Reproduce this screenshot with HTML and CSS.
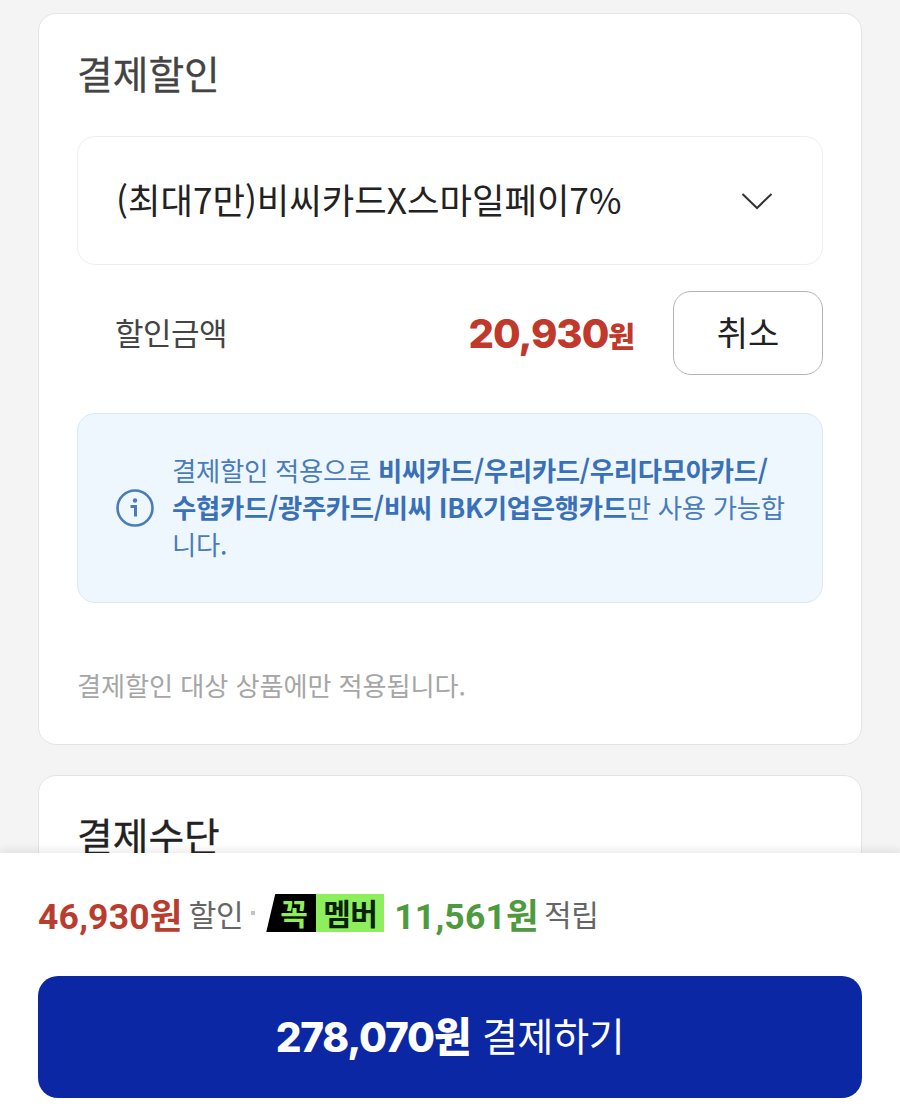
FILE: index.html
```html
<!DOCTYPE html>
<html lang="ko">
<head>
<meta charset="utf-8">
<title>결제할인</title>
<link rel="stylesheet" href="styles.css">
</head>
<body>
<main class="page">
  <section class="card">
    <h2 class="card-title">결제할인</h2>
    <div class="select">
      <span class="select-label">(최대7만)비씨카드X스마일페이7%</span>
      <svg class="chevron" width="32" height="20" viewBox="0 0 32 20"><path d="M1.5 3 L16 17 L30.5 3" fill="none" stroke="#333" stroke-width="2"/></svg>
    </div>
    <div class="amount-row">
      <span class="amount-label">할인금액</span>
      <span class="amount-value"><b class="amount-num">20,930</b><b class="amount-unit">원</b></span>
      <button class="cancel">취소</button>
    </div>
    <div class="notice">
      <svg class="info" width="40" height="40" viewBox="0 0 40 40"><circle cx="20" cy="20" r="17.5" fill="none" stroke="#4a7cba" stroke-width="2.6"/><circle cx="20" cy="12.5" r="2.2" fill="#4a7cba"/><path d="M15.5 18.5 H20.5 V28.5" fill="none" stroke="#4a7cba" stroke-width="3"/></svg>
      <p class="notice-text">결제할인 적용으로 <b>비씨카드/우리카드/우리다모아카드/수협카드/광주카드/비씨 IBK기업은행카드</b>만 사용 가능합니다.</p>
    </div>
    <p class="foot-note">결제할인 대상 상품에만 적용됩니다.</p>
  </section>
  <section class="card card-next">
    <h2 class="card-title card-title-dark">결제수단</h2>
  </section>
</main>
<footer class="footer">
  <div class="summary">
    <b class="sum-red">46,930원</b><span class="sum-text">할인</span><span class="dot"></span>
    <span class="badge"><span class="badge-black">꼭</span><span class="badge-green">멤버</span></span>
    <b class="sum-green">11,561원</b><span class="sum-text sum-text-tight">적립</span>
  </div>
  <button class="pay"><b class="pay-price">278,070원</b><span class="pay-text">결제하기</span></button>
</footer>
</body>
</html>
```

FILE: styles.css
```css
* { box-sizing: border-box; }
html, body {
  margin: 0;
  height: 1117px;
  overflow: hidden;
  background: #f4f4f4;
  font-family: "Noto Sans CJK KR", "Noto Sans", sans-serif;
}
.page {
  display: flex;
  flex-direction: column;
  gap: 30px;
  padding: 13px 38px 0;
}
.card {
  background: #fff;
  border: 1px solid #e4e4e4;
  border-radius: 18px;
  padding: 0 38px;
  height: 732px;
}
.card-next { height: 300px; }
.card-title {
  margin: 32px 0 38px;
  font-size: 38.8px;
  line-height: 52px;
  font-weight: 400;
  color: #444;
  -webkit-text-stroke: 0.3px #444;
}
.card-title-dark { color: #222; -webkit-text-stroke: 0.3px #222; }
.select {
  display: flex;
  align-items: center;
  justify-content: space-between;
  height: 129px;
  padding: 0 49px 0 38px;
  border: 1px solid #eeeeee;
  border-radius: 18px;
}
.select-label {
  font-size: 35.3px;
  color: #222;
  letter-spacing: 0;
  line-height: 48px;
  margin-bottom: 3px;
}
.amount-row {
  display: flex;
  align-items: center;
  margin-top: 26px;
  padding-left: 38px;
}
.amount-label { flex: 1; font-size: 31px; color: #444; letter-spacing: -0.5px; padding-bottom: 3px; }
.amount-value { display: flex; align-items: baseline; margin-right: 38px; color: #c0392b; }
.amount-num { font-family: "Inter", sans-serif; font-size: 40px; font-weight: 800; letter-spacing: -1px; }
.amount-unit { font-size: 29px; font-weight: 800; }
.cancel {
  width: 150px;
  height: 84px;
  background: #fff;
  border: 1.5px solid #b4b4b4;
  border-radius: 18px;
  font: inherit;
  font-size: 34px;
  color: #222;
  padding: 0 0 4px;
}
.notice {
  display: flex;
  align-items: center;
  gap: 17px;
  height: 190px;
  margin-top: 38px;
  padding: 0 37px 0 37px;
  background: #eff7fe;
  border: 1px solid #dde8f2;
  border-radius: 18px;
}
.info { flex: none; }
.notice-text {
  margin: -4px 0 0;
  font-size: 26.4px;
  line-height: 37px;
  color: #4a7cba;
  letter-spacing: -0.3px;
  word-break: break-all;
}
.notice-text b { font-weight: 700; color: #3a70b8; }
.foot-note {
  margin: 63px 0 0;
  font-size: 26.2px;
  line-height: 38px;
  color: #a6a6a6;
  letter-spacing: -0.1px;
}
.footer {
  position: absolute;
  left: 0;
  right: 0;
  top: 853px;
  height: 264px;
  background: #fff;
  box-shadow: 0 -4px 8px rgba(0, 0, 0, 0.07);
  padding: 0 38px;
}
.summary {
  display: flex;
  align-items: center;
  height: 40px;
  margin-top: 40px;
  font-size: 29px;
}
.sum-red, .sum-green { font-family: "Roboto", "Noto Sans CJK KR", sans-serif; font-size: 35.5px; font-weight: 700; letter-spacing: 0.2px; }
.sum-red { color: #b93d2f; }
.sum-green { color: #4f9a3f; margin-left: 10px; }
.sum-text { margin-left: 6px; color: #666; font-size: 30px; letter-spacing: -0.3px; }
.sum-text-tight { margin-left: 5px; }
.dot { width: 4px; height: 4px; margin: 0 11px 0 8px; background: #c4c4c4; }
.badge { display: flex; height: 38px; font-size: 30px; font-weight: 700; line-height: 36px; }
.badge-black {
  width: 50px;
  padding-left: 14px;
  background: #000;
  color: #8df05a;
  clip-path: polygon(9px 0, 100% 0, 100% 100%, 0 100%);
  letter-spacing: 0;
}
.badge-green { width: 68px; text-align: center; background: #8def5c; color: #0b1f0b; letter-spacing: -0.5px; }
.pay {
  display: flex;
  align-items: center;
  justify-content: center;
  gap: 12px;
  width: 100%;
  height: 122px;
  margin-top: 43px;
  border: 0;
  border-radius: 20px;
  background: #0c27a4;
  color: #fff;
  font: inherit;
  padding: 0 0 6px;
}
.pay-price { font-family: "Inter", "Noto Sans CJK KR", sans-serif; font-size: 40.5px; font-weight: 800; letter-spacing: -1.2px; }
.pay-text { font-size: 39px; letter-spacing: -0.3px; }
```
